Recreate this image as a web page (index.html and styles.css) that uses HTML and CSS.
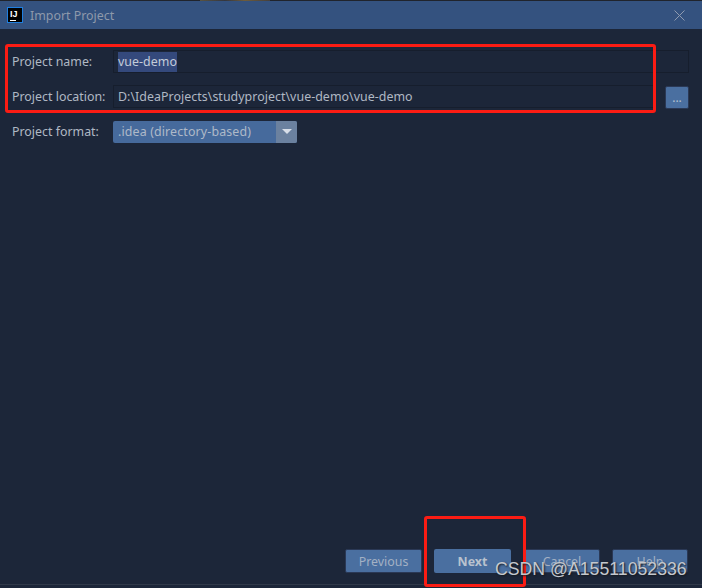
FILE: index.html
```html
<!DOCTYPE html>
<html lang="en">
<head>
    <meta charset="UTF-8">
    <title>Import Project</title>
    <link rel="stylesheet" href="styles.css">
</head>
<body>
    <div class="top-strip"></div>

    <div class="titlebar">
        <div class="app-icon"><span class="app-letters">IJ</span><span class="app-bar"></span></div>
        <span class="title">Import Project</span>
        <svg class="close" width="11" height="11" viewBox="0 0 11 11">
            <path d="M0.5 0.5 L10.5 10.5 M10.5 0.5 L0.5 10.5" stroke="#8f9bb0" stroke-width="1" fill="none"/>
        </svg>
    </div>

    <div class="content">
        <div class="form">
            <div class="row">
                <label>Project name:</label>
                <div class="field"><span class="selected">vue-demo</span></div>
            </div>
            <div class="row">
                <label>Project location:</label>
                <div class="field">D:\IdeaProjects\studyproject\vue-demo\vue-demo</div>
                <button class="browse">...</button>
            </div>
            <div class="row">
                <label>Project format:</label>
                <div class="select">
                    <span class="select-text">.idea (directory-based)</span>
                    <span class="select-arrow"></span>
                </div>
            </div>
        </div>

        <div class="buttons">
            <button class="btn btn-prev">Previous</button>
            <button class="btn btn-next">Next</button>
            <button class="btn btn-cancel">Cancel</button>
            <button class="btn">Help</button>
        </div>
    </div>

    <!-- annotations on top of the screenshot -->
    <div class="mark mark-form"></div>
    <div class="mark mark-next"></div>
    <div class="watermark">CSDN @A15511052336</div>
</body>
</html>
```

FILE: styles.css
```css
html, body {
    height: 100%;
}

body {
    font-family: "Noto Sans", "Open Sans", sans-serif;
    font-size: 12.4px;
    background-color: #1c2639;
    color: #b0b8c4;
    margin: 0;
    padding: 0;
    position: relative;
    overflow: hidden;
    display: flex;
    flex-direction: column;
}

/* sliver of the window behind the dialog */
.top-strip {
    height: 1px;
    background: linear-gradient(to right, #20242c 200px, #5a5340 200px, #33363f 225px, #6e5c3c 245px, #45403c 270px, #20242c 270px);
}

.titlebar {
    height: 28px;
    background-color: #34527f;
    display: flex;
    align-items: center;
    padding: 0 17px 0 7px;
    flex-shrink: 0;
}

.app-icon {
    width: 14px;
    height: 14px;
    background-color: #000;
    border: 1px solid #1f7fe0;
    margin-right: 7px;
    position: relative;
    box-sizing: content-box;
}

.app-letters {
    position: absolute;
    top: 2px;
    left: 2px;
    font-family: "Liberation Sans", sans-serif;
    font-size: 9px;
    line-height: 8px;
    font-weight: bold;
    color: #fff;
}

.app-bar {
    position: absolute;
    left: 2px;
    bottom: 1px;
    width: 6px;
    height: 1px;
    background-color: #fff;
}

.title {
    flex: 1;
    color: #8e99ab;
}

.content {
    flex: 1;
    display: flex;
    flex-direction: column;
    justify-content: space-between;
    padding: 21px 13px 11px 12px;
    border-bottom: 1px solid #303949;
    margin-bottom: 3px;
}

.form {
    display: flex;
    flex-direction: column;
    gap: 12px;
}

.row {
    display: flex;
    align-items: center;
    height: 23px;
}

.row label {
    width: 101px;
    flex-shrink: 0;
}

.field {
    flex: 1;
    height: 23px;
    box-sizing: border-box;
    border: 1px solid #161e2d;
    padding-left: 4px;
    line-height: 21px;
    letter-spacing: 0.04px;
    white-space: nowrap;
}

.selected {
    background-color: #34497c;
    color: #c3cbd9;
    display: inline-block;
    line-height: 20px;
}

.browse {
    width: 24px;
    height: 23px;
    margin: 1px 0 0 10px;
    padding: 0;
    border: 1px solid #2a3855;
    border-radius: 2px;
    background-color: #4a6fa0;
    color: #b4c0d0;
    font-family: inherit;
    font-size: 12px;
}

.select {
    width: 184px;
    height: 22px;
    display: flex;
    border-radius: 2px;
    overflow: hidden;
    background-color: #466a9c;
    color: #aeb9c8;
}

.select-text {
    flex: 1;
    padding-left: 5px;
    line-height: 22px;
    letter-spacing: 0.14px;
}

.select-arrow {
    width: 21px;
    background-color: #6b819f;
    position: relative;
}

.select-arrow::after {
    content: "";
    position: absolute;
    left: 6px;
    top: 8px;
    border-left: 5px solid transparent;
    border-right: 5px solid transparent;
    border-top: 5px solid #d8dee8;
}

.buttons {
    display: flex;
    justify-content: flex-end;
    align-items: center;
    gap: 12px;
    margin-right: 1px;
}

.btn {
    width: 76px;
    height: 24px;
    padding: 0;
    border: 1px solid #2a3855;
    border-radius: 2px;
    background-color: #4a6fa0;
    color: #a3b1c4;
    font-family: inherit;
    font-size: 12.4px;
}

.btn-prev {
    width: 77px;
}

.btn-next {
    width: 77px;
    margin-right: 1px;
    border: none;
    font-weight: bold;
    color: #b9c2ce;
}

.btn-cancel {
    width: 76px;
}

.mark {
    position: absolute;
    box-sizing: border-box;
    border: 3px solid #fb1c14;
    border-radius: 3px;
}

.mark-form {
    left: 5px;
    top: 44px;
    width: 651px;
    height: 69px;
}

.mark-next {
    left: 424px;
    top: 516px;
    width: 102px;
    height: 71px;
}

.watermark {
    position: absolute;
    left: 495px;
    top: 557px;
    font-family: "Liberation Sans", sans-serif;
    font-size: 17.7px;
    line-height: 24px;
    color: #c4c8ce;
    text-shadow: 1px 1px 2px #14181f;
    white-space: nowrap;
}
```
